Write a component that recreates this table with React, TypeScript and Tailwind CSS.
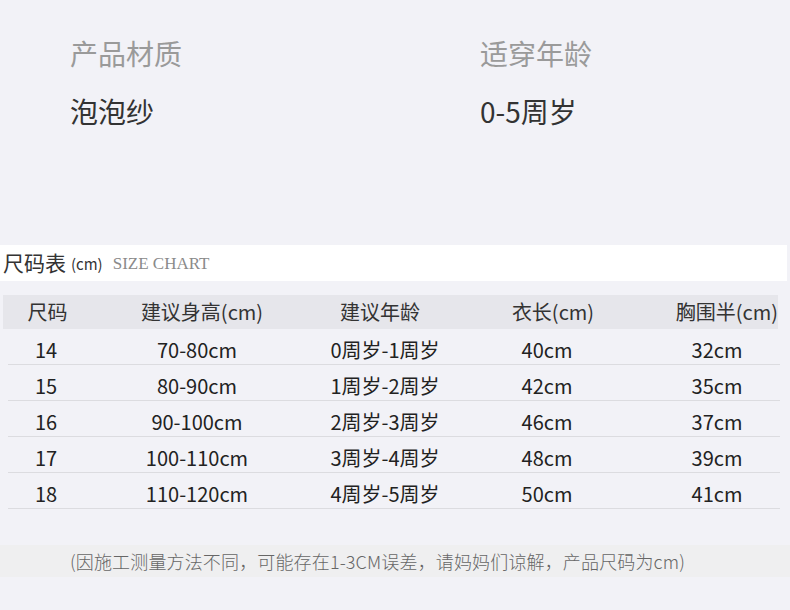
import React from "react";

const FONT = { fontFamily: '"Noto Sans CJK SC", "Noto Sans", sans-serif' };

const rows = [
  ["14", "70-80cm", "0周岁-1周岁", "40cm", "32cm"],
  ["15", "80-90cm", "1周岁-2周岁", "42cm", "35cm"],
  ["16", "90-100cm", "2周岁-3周岁", "46cm", "37cm"],
  ["17", "100-110cm", "3周岁-4周岁", "48cm", "39cm"],
  ["18", "110-120cm", "4周岁-5周岁", "50cm", "41cm"],
];

export default function App() {
  return (
    <div className="w-[790px] h-[610px] bg-[#f2f2f7] overflow-hidden" style={FONT}>
      {/* top info */}
      <div className="flex pt-[35px] h-[245px]">
        <div className="w-[480px] pl-[70px]">
          <div className="text-[28px] leading-[36px] text-[#9a9a9a]">产品材质</div>
          <div className="text-[28px] leading-[36px] text-[#333] mt-[22px]">泡泡纱</div>
        </div>
        <div>
          <div className="text-[28px] leading-[36px] text-[#9a9a9a]">适穿年龄</div>
          <div className="text-[28px] leading-[36px] text-[#333] mt-[22px]">0-5周岁</div>
        </div>
      </div>

      {/* size chart title */}
      <div className="h-[36px] w-[787px] bg-white flex items-center pl-[3px]">
        <span className="text-[21px] text-[#333]">尺码表</span>
        <span className="text-[15px] text-[#333] ml-[5px] mt-[3px]">(cm)</span>
        <span
          className="text-[17px] text-[#8a8a8a] ml-[10px] mt-[2px]"
          style={{ fontFamily: '"Liberation Serif", serif' }}
        >
          SIZE CHART
        </span>
      </div>

      {/* table */}
      <div className="mt-[14px] ml-[3px] w-[775px]">
        <div className="h-[34px] bg-[#e6e6eb] flex items-center text-[20px] text-[#333]">
          <div className="w-[89px] text-center">尺码</div>
          <div className="w-[220px] text-center">建议身高(cm)</div>
          <div className="w-[136px] text-center">建议年龄</div>
          <div className="w-[210px] text-center">衣长(cm)</div>
          <div className="w-[120px] text-right whitespace-nowrap">胸围半(cm)</div>
        </div>
        {rows.map((r) => (
          <div
            key={r[0]}
            className="h-[36px] ml-[5px] w-[772px] border-b border-[#dcdce0] flex items-center pt-[6px] text-[20px] text-[#222]"
          >
            <div className="w-[76px] text-center">{r[0]}</div>
            <div className="w-[226px] text-center">{r[1]}</div>
            <div className="w-[150px] text-center">{r[2]}</div>
            <div className="w-[174px] text-center">{r[3]}</div>
            <div className="w-[146px] text-center pl-[20px]">{r[4]}</div>
          </div>
        ))}
      </div>

      {/* footer note */}
      <div className="mt-[36px] h-[32px] bg-[#efeff0] flex items-center pl-[70px]">
        <span className="text-[18px] font-light text-[#666] whitespace-nowrap tracking-[0.15px]">
          (因施工测量方法不同，可能存在1-3CM误差，请妈妈们谅解，产品尺码为cm)
        </span>
      </div>
    </div>
  );
}
